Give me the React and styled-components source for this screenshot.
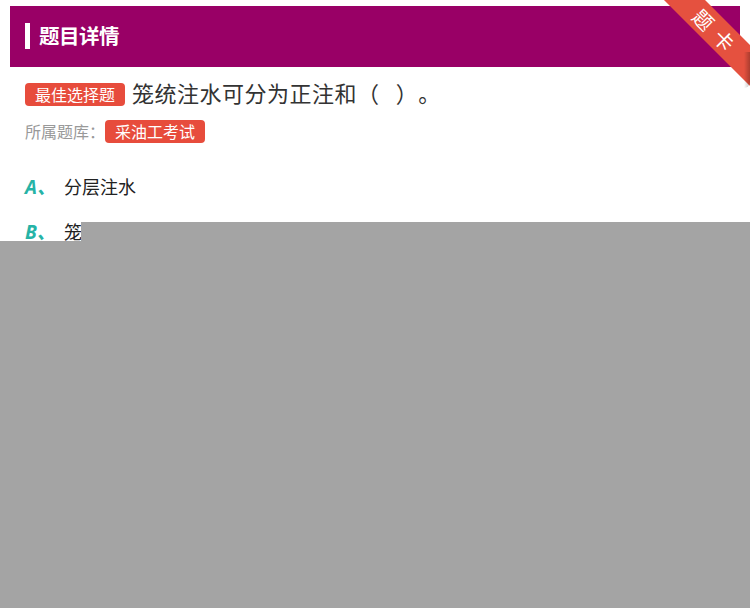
import styled, { createGlobalStyle } from "styled-components";

const GlobalStyle = createGlobalStyle`
  html, body {
    margin: 0;
    padding: 0;
    background: #fff;
    font-family: "Noto Sans CJK SC", "Noto Sans", sans-serif;
    text-spacing-trim: space-all;
  }
`;

const options = [
    {key: "A", text: "分层注水"},
    {key: "B", text: "笼统注水"},
    {key: "C", text: "正注"},
    {key: "D", text: "反注"},
];

const App = () => {
    return (
        <>
            <GlobalStyle/>
            <Page>
                <Header>
                    <HeaderMark/>
                    <HeaderTitle>题目详情</HeaderTitle>
                </Header>
                <Content>
                    <QuestionRow>
                        <Tag>最佳选择题</Tag>
                        <QuestionText>{"笼统注水可分为正注和（   ）。"}</QuestionText>
                    </QuestionRow>
                    <BankRow>
                        <BankLabel>所属题库：</BankLabel>
                        <Tag>采油工考试</Tag>
                    </BankRow>
                    <OptionList>
                        {options.map((item) => (
                            <Option key={item.key}>
                                <OptionKey>{item.key}、</OptionKey>
                                <OptionText>{item.text}</OptionText>
                            </Option>
                        ))}
                    </OptionList>
                </Content>
            </Page>
            <Ribbon>
                <RibbonBand>题卡</RibbonBand>
                <RibbonFold/>
            </Ribbon>
            <Mask/>
        </>
    );
};

const Page = styled.div`
  padding: 6px 10px 0 10px;
`;
const Header = styled.div`
  height: 61px;
  box-sizing: border-box;
  padding: 0 0 4px 15px;
  background: #990066;
  display: flex;
  align-items: center;
`;
const HeaderMark = styled.div`
  width: 5px;
  height: 26px;
  background: #fff;
  margin-right: 9px;
  margin-top: 3px;
`;
const HeaderTitle = styled.div`
  color: #fff;
  font-size: 20.5px;
  font-weight: 700;
  letter-spacing: -0.5px;
`;
const Content = styled.div`
  padding: 0 15px;
`;
const QuestionRow = styled.div`
  display: flex;
  align-items: center;
  margin-top: 12px;
  height: 30px;
`;
const Tag = styled.span`
  display: inline-flex;
  align-items: center;
  justify-content: center;
  height: 23px;
  padding: 0 10px;
  background: #e74c3c;
  color: #fff;
  font-size: 16px;
  border-radius: 4px;
  line-height: 1;
`;
const QuestionText = styled.div`
  margin-left: 7px;
  font-size: 22px;
  letter-spacing: 0.5px;
  color: #333;
  line-height: 30px;
  margin-top: -4px;
  white-space: pre;
`;
const BankRow = styled.div`
  display: flex;
  align-items: center;
  margin-top: 10px;
  height: 24px;
`;
const BankLabel = styled.span`
  font-size: 16px;
  color: #999;
`;
const OptionList = styled.div`
  margin-top: 31px;
  display: flex;
  flex-direction: column;
  gap: 21px;
`;
const Option = styled.div`
  display: flex;
  align-items: center;
  height: 24px;
`;
const OptionKey = styled.span`
  width: 39px;
  color: #26b3a6;
  font-size: 19px;
  font-weight: 700;
  font-style: italic;
  font-family: "Noto Sans", "Noto Sans CJK SC", sans-serif;
`;
const OptionText = styled.span`
  font-size: 18px;
  color: #222;
`;
const Ribbon = styled.div`
  position: absolute;
  top: 0;
  right: 0;
  width: 94px;
  height: 90px;
  overflow: hidden;
`;
const RibbonBand = styled.div`
  position: absolute;
  left: -12px;
  top: 15px;
  width: 140px;
  height: 29px;
  padding-left: 9px;
  box-sizing: border-box;
  background: #e5513f;
  color: #fff;
  font-size: 20px;
  line-height: 29px;
  text-align: center;
  letter-spacing: 9px;
  transform: rotate(45deg);
  border-radius: 6px;
`;
const RibbonFold = styled.div`
  position: absolute;
  right: 0;
  bottom: 2px;
  width: 6px;
  height: 36px;
  background: linear-gradient(to right, rgba(0, 0, 0, 0), rgba(0, 0, 0, 0.25));
  border-bottom-right-radius: 6px;
`;
const Mask = styled.div`
  position: fixed;
  top: 222px;
  left: 0;
  right: 0;
  bottom: 0;
  background: #a4a4a4;
  clip-path: polygon(81px 0, 100% 0, 100% 100%, 0 100%, 0 19px, 81px 19px);
`;

export default App;
